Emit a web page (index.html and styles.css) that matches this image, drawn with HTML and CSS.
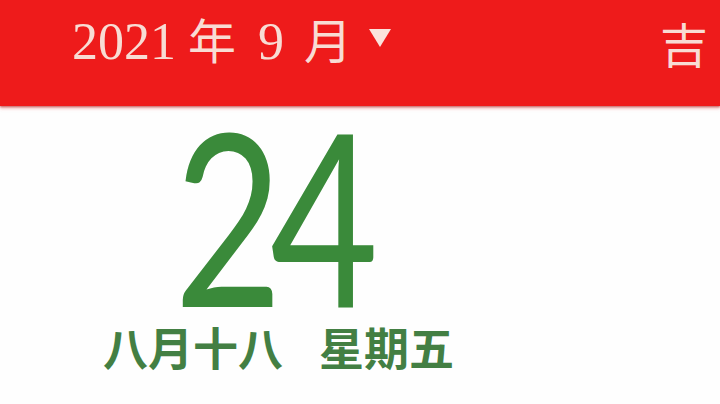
FILE: index.html
```html
<!DOCTYPE html>
<html lang="zh-CN">
<head>
<meta charset="utf-8">
<title>日历</title>
<link rel="stylesheet" href="styles.css">
</head>
<body>
<div class="page">
  <header class="topbar">
    <div class="month-picker">
      <span class="year">2021</span><span class="cjk unit-year">年</span><span class="month">9</span><span class="cjk unit-month">月</span>
      <svg class="caret" width="24" height="20" viewBox="0 0 24 20"><polygon points="1,1 23,1 12,19" fill="#fbe3dc"/></svg>
    </div>
    <div class="luck cjk">吉</div>
  </header>
  <main class="day">
    <div class="day-num"><span>24</span></div>
    <div class="lunar">
      <span class="lunar-date">八月十八</span>
      <span class="weekday">星期五</span>
    </div>
  </main>
</div>
</body>
</html>
```
FILE: styles.css
```css
html, body {
  margin: 0;
  padding: 0;
  background: #fefefe;
}
.page {
  width: 720px;
  height: 404px;
  overflow: hidden;
  background: #fefefe;
}
.topbar {
  height: 106px;
  background: #ee1b1b;
  box-shadow: 0 1px 2px rgba(150, 20, 20, 0.6), 0 3px 3px rgba(240, 120, 120, 0.35);
  display: flex;
  align-items: flex-start;
  justify-content: space-between;
  padding: 8px 12px 0 72px;
  box-sizing: border-box;
  color: #f8dcd4;
  position: relative;
}
.month-picker {
  display: flex;
  align-items: baseline;
  font-family: "Liberation Serif", serif;
  font-size: 52px;
  line-height: 60px;
}
.cjk {
  font-family: "Noto Sans CJK SC", sans-serif;
  font-weight: 400;
}
.month-picker .cjk {
  font-size: 48px;
  line-height: 60px;
}
.unit-year {
  margin-left: 12px;
}
.month {
  margin-left: 22px;
}
.unit-month {
  margin-left: 20px;
}
.caret {
  margin-left: 16px;
  align-self: center;
  margin-top: -4px;
}
.luck {
  font-size: 48px;
  line-height: 60px;
  margin-top: 4px;
}
.day-num {
  height: 220px;
  padding-left: 174px;
  box-sizing: border-box;
}
.day-num span {
  display: inline-block;
  font-family: Lato, "Liberation Sans", sans-serif;
  font-size: 240px;
  line-height: 216px;
  color: #3a8a3a;
  letter-spacing: -16px;
  transform: scaleX(0.78);
  transform-origin: left center;
}
.lunar {
  padding-left: 103px;
  font-family: "Noto Sans CJK SC", sans-serif;
  font-weight: 700;
  font-size: 45px;
  line-height: 50px;
  color: #437f43;
  display: flex;
  gap: 36px;
  margin-top: -4px;
}
```
